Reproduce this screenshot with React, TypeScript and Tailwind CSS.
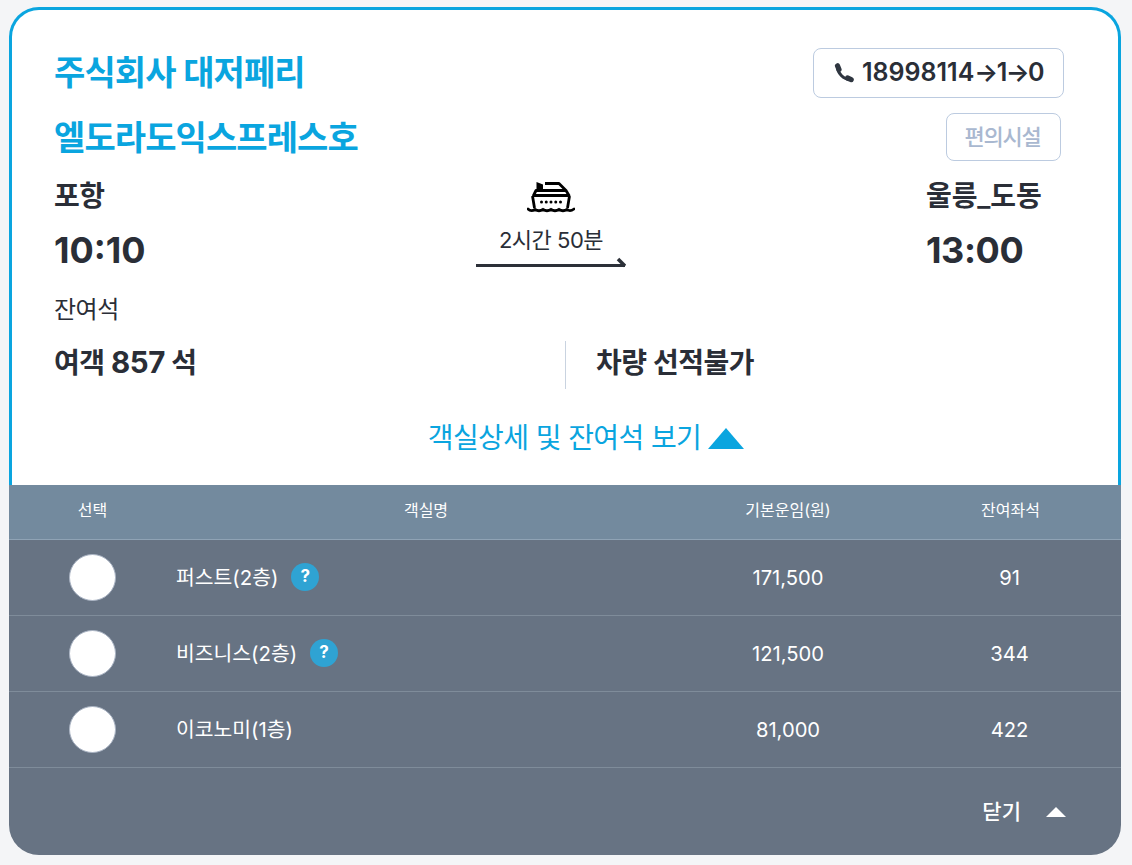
import React from "react";

type Cabin = { name: string; fare: string; seats: string; help?: boolean };

const cabins: Cabin[] = [
  { name: "퍼스트(2층)", fare: "171,500", seats: "91", help: true },
  { name: "비즈니스(2층)", fare: "121,500", seats: "344", help: true },
  { name: "이코노미(1층)", fare: "81,000", seats: "422" },
];

const ShipIcon = () => (
  <svg width="48" height="31" viewBox="0 0 48 31" fill="none" stroke="#000" strokeWidth="2.8">
    <path d="M9.5 0 L16 2.5 L16 8 L9.5 8 Z" fill="#000" stroke="none" />
    <path d="M18 1.5 L32 1.5 L39 8.5 L9 8.5 L6.5 13.5 L42 13.5 L39 8.5" strokeLinejoin="round" />
    <path d="M5.5 14 L7.5 26 M42.5 14 L40.5 26" />
    <g fill="#000" stroke="none">
      <circle cx="14.5" cy="20" r="1.5" />
      <circle cx="19.25" cy="20" r="1.5" />
      <circle cx="24" cy="20" r="1.5" />
      <circle cx="28.75" cy="20" r="1.5" />
      <circle cx="33.5" cy="20" r="1.5" />
    </g>
    <path d="M1 27 Q4 30 8 27.5 Q12 30 16 27.5 Q20 30 24 27.5 Q28 30 32 27.5 Q36 30 40 27.5 Q43 30 47 27" strokeLinecap="round" />
  </svg>
);

const PhoneIcon = () => (
  <svg width="20" height="20" viewBox="0 0 20 20" fill="none" stroke="#2f3640" strokeLinecap="round">
    <path d="M3.5 4 C3.5 10 9.5 16.5 16 16.5" strokeWidth="3" />
    <path d="M3.5 2.8 L5 6.5" strokeWidth="5.2" />
    <path d="M13.5 15 L17.2 16.6" strokeWidth="5.2" />
  </svg>
);

const Row = ({ cabin }: { cabin: Cabin }) => (
  <div className="grid grid-cols-[167px_500px_224px_221px] h-[76px] items-center border-b border-[#7f8c9a] text-[20.2px] text-white">
    <div className="flex justify-center">
      <span className="block w-[47px] h-[47px] rounded-full bg-white border border-[#aab4c4]" />
    </div>
    <div className="flex items-center gap-[13px]">
      <span className="pt-[2px] text-[20.4px]">{cabin.name}</span>
      {cabin.help && (
        <span className="flex w-[28px] h-[28px] mt-[-1px] items-center justify-center rounded-full bg-[#2fa3d3] text-[17px] font-bold">?</span>
      )}
    </div>
    <div className="pt-[2px] text-center">{cabin.fare}</div>
    <div className="pt-[2px] pr-[2px] text-center">{cabin.seats}</div>
  </div>
);

export default function App() {
  return (
    <div
      className="min-h-[865px] bg-[#f4f5f7] pt-[7px] pl-[9px] text-[#2a2e37]"
      style={{ fontFamily: 'Inter, "Noto Sans CJK KR", sans-serif' }}
    >
      <div className="w-[1112px]">
        <section className="h-[478px] rounded-t-[30px] border-x-[3px] border-t-[3px] border-[#0aa5df] bg-white pl-[42px] pr-[54px] pt-[30px]">
          <div className="flex items-start justify-between h-[65px]">
            <h1 className="mt-[9px] text-[34px] font-semibold tracking-[-0.9px] leading-[48px] text-[#0aa5df]">주식회사 대저페리</h1>
            <button className="mt-[8px] flex h-[50px] w-[251px] items-center justify-center gap-[8px] rounded-[8px] border border-[#bccbe0] bg-white text-[25px] font-semibold">
              <PhoneIcon />
              <span>
                18998114<span className="tracking-[-1.5px]">→1→0</span>
              </span>
            </button>
          </div>
          <div className="flex items-start justify-between h-[71px]">
            <h2 className="mt-[9px] text-[34px] font-semibold tracking-[-0.9px] leading-[48px] text-[#0aa5df]">엘도라도익스프레스호</h2>
            <button className="flex mt-[8px] mr-[3px] h-[48px] w-[115px] items-center justify-center rounded-[8px] border border-[#bccbe0] bg-white pr-[2px] text-[22px] font-medium tracking-[-1.2px] text-[#a9b8d0]">
              편의시설
            </button>
          </div>
          <div className="flex justify-between h-[105px]">
            <div className="w-[200px]">
              <div className="text-[28px] font-semibold tracking-[-0.5px] leading-[40px]">포항</div>
              <div className="mt-[12px] text-[36px] font-bold leading-[44px]">10:10</div>
            </div>
            <div className="flex flex-col items-center ml-[222px]">
              <div className="mt-[6px] h-[31px]">
                <ShipIcon />
              </div>
              <div className="mt-[11px] text-[22px] tracking-[-0.5px] leading-[32px]">2시간 50분</div>
              <svg width="150" height="12" viewBox="0 0 150 12">
                <path d="M0 9.5 H149" fill="none" stroke="#2c3038" strokeWidth="3" />
                <path d="M149 10 L142 3" fill="none" stroke="#2c3038" strokeWidth="3.5" />
              </svg>
            </div>
            <div className="w-[136px] ml-[auto] mr-[2px]">
              <div className="text-[28px] font-semibold tracking-[-0.1px] leading-[40px]">울릉_도동</div>
              <div className="mt-[12px] text-[36px] font-bold tracking-[-0.4px] leading-[44px]">13:00</div>
            </div>
          </div>
          <div className="text-[24px] tracking-[-0.5px] leading-[36px] mt-[11px]">잔여석</div>
          <div className="mt-[13px] flex h-[48px] items-center">
            <div className="w-[511px] pb-[6px] text-[28px] font-semibold tracking-[-0.5px] leading-[44px]">
              여객 <span className="text-[29.5px] font-bold">857</span> 석
            </div>
            <div className="h-[48px] border-l border-[#c9d3e0] pl-[30px] text-[28px] font-semibold tracking-[-0.5px] leading-[44px]">차량 선적불가</div>
          </div>
          <div className="mt-[28px] flex items-center justify-center gap-[7px] pl-[54px] text-[28px] tracking-[-0.6px] text-[#0aa5df]">
            <span>객실상세 및 잔여석 보기</span>
            <span className="h-0 w-0 border-x-[18px] border-b-[21px] border-x-transparent border-b-[#0aa5df]" />
          </div>
        </section>
        <section className="rounded-b-[30px] bg-[#677383] overflow-hidden">
          <div className="grid h-[55px] grid-cols-[167px_500px_224px_221px] items-center border-b border-[#8fa3b5] bg-[#738a9e] pb-[4px] text-center text-[16px] text-white">
            <div>선택</div>
            <div>객실명</div>
            <div>기본운임(원)</div>
            <div>잔여좌석</div>
          </div>
          {cabins.map((cabin) => (
            <Row key={cabin.name} cabin={cabin} />
          ))}
          <div className="flex h-[87px] items-center justify-end gap-[25px] pr-[55px] text-[21px] font-medium text-white">
            <span>닫기</span>
            <span className="h-0 w-0 border-x-[10px] border-b-[10px] border-x-transparent border-b-white" />
          </div>
        </section>
      </div>
    </div>
  );
}
